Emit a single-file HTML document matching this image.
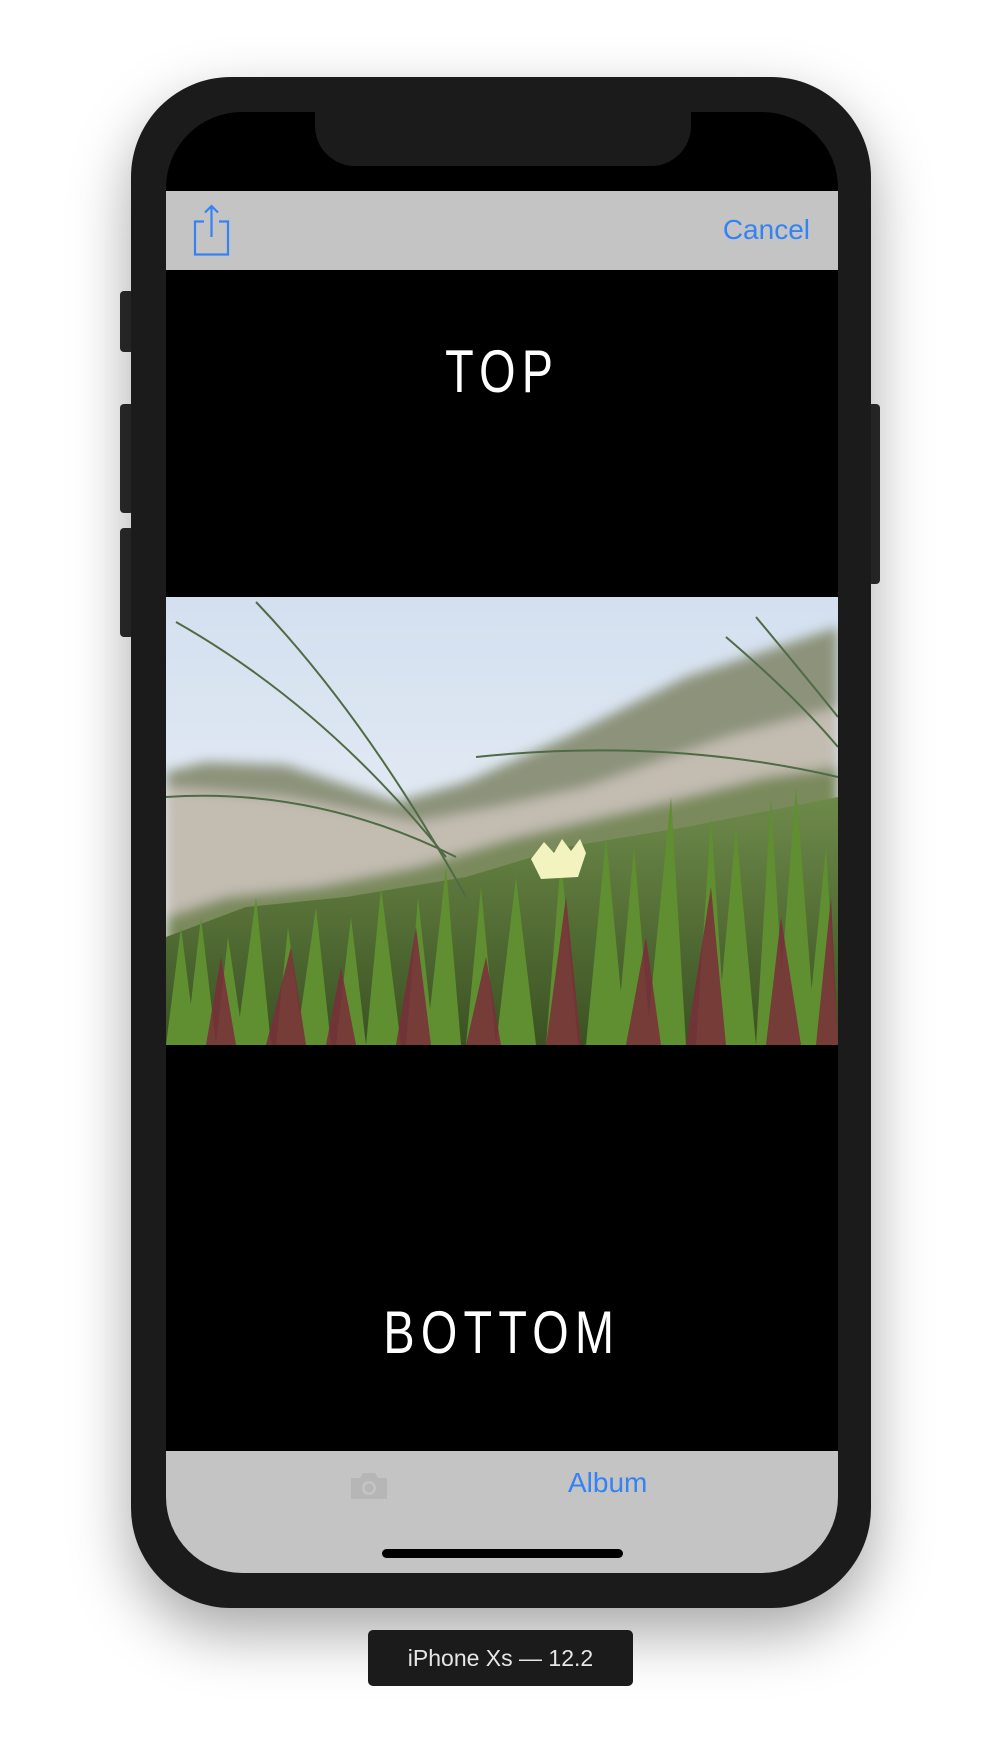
<!DOCTYPE html>
<html><head><meta charset="utf-8"><style>
html,body{margin:0;padding:0;width:1004px;height:1758px;background:#fff;overflow:hidden;font-family:"Liberation Sans",sans-serif}
.phone{position:absolute;left:131px;top:77px;width:740px;height:1531px;background:#1b1b1b;border-radius:100px;box-shadow:0 25px 60px rgba(0,0,0,.35)}
.btn{position:absolute;background:#2c2c2c;border-radius:4px}
.screen{position:absolute;left:166px;top:112px;width:672px;height:1461px;background:#000;border-radius:76px;overflow:hidden}
.notch{position:absolute;left:149px;top:0;width:376px;height:54px;background:#1b1b1b;border-radius:0 0 40px 40px}
.bar{position:absolute;left:0;width:672px;background:#c4c4c4}
.big{position:absolute;left:0;width:672px;text-align:center;color:#fff;font-size:60px;line-height:60px}
.big span{display:inline-block;transform:scaleX(.78);letter-spacing:8px}
.label{position:absolute;left:368px;top:1630px;width:265px;height:56px;background:#1b1b1b;border-radius:5px;color:#e6e6e6;font-size:23px;line-height:56px;text-align:center}
</style></head><body>
<div class="btn" style="left:120px;top:291px;width:14px;height:61px"></div>
<div class="btn" style="left:120px;top:404px;width:14px;height:109px"></div>
<div class="btn" style="left:120px;top:528px;width:14px;height:109px"></div>
<div class="btn" style="left:868px;top:404px;width:12px;height:180px"></div>
<div class="phone"></div>
<div class="screen">
 <div class="notch"></div>
 <div class="bar" style="top:79px;height:79px">
  <svg style="position:absolute;left:26px;top:12px" width="40" height="56" viewBox="0 0 40 56">
   <path d="M12 18.5H3V51.5H36V18.5H27" fill="none" stroke="#3582f5" stroke-width="2.2"/>
   <path d="M19.5 3V34M13 9.5L19.5 3L26 9.5" fill="none" stroke="#3582f5" stroke-width="2.2"/>
  </svg>
  <div style="position:absolute;right:28px;top:21px;color:#3582f5;font-size:28px;line-height:36px">Cancel</div>
 </div>
 <div class="big" style="top:230px"><span>TOP</span></div>
 <svg style="position:absolute;left:0;top:485px" width="672" height="448" viewBox="0 0 672 448">
  <defs>
   <linearGradient id="sky" x1="0" y1="0" x2="0" y2="1"><stop offset="0" stop-color="#d3e0f0"/><stop offset="1" stop-color="#f1f3f6"/></linearGradient>
   <linearGradient id="g" x1="0" y1="0" x2="0" y2="1"><stop offset="0" stop-color="#6e8a4a"/><stop offset="1" stop-color="#3a5222"/></linearGradient>
   <filter id="b"><feGaussianBlur stdDeviation="6"/></filter>
  </defs>
  <rect width="672" height="448" fill="url(#sky)"/>
  <g filter="url(#b)">
   <path d="M0 175 L40 165 L120 168 L170 185 L230 205 L300 185 L400 140 L520 80 L672 30 L672 448 L0 448Z" fill="#8c937a"/>
   <path d="M0 190 L120 200 L250 225 L330 210 L420 190 L560 140 L672 110 L672 448 L0 448Z" fill="#c2bcb1"/>
   <path d="M0 320 L60 300 L150 290 L250 270 L350 240 L480 210 L600 180 L672 170 L672 448 L0 448Z" fill="#7a8a5c"/>
  </g>
  <path d="M0 340 L80 310 L180 300 L300 280 L400 250 L520 230 L672 200 L672 448 L0 448Z" fill="url(#g)"/>
  <g fill="#5f8f30">
   <path d="M0 448 L15 330 L30 448Z"/><path d="M20 448 L35 320 L50 448Z"/><path d="M50 448 L62 340 L78 448Z"/><path d="M70 448 L90 300 L105 448Z"/><path d="M110 448 L122 330 L138 448Z"/><path d="M130 448 L150 310 L165 448Z"/>
   <path d="M170 448 L185 320 L200 448Z"/><path d="M200 448 L215 290 L235 448Z"/><path d="M240 448 L252 300 L268 448Z"/><path d="M260 448 L280 270 L295 448Z"/><path d="M300 448 L315 290 L330 448Z"/><path d="M330 448 L350 280 L370 448Z"/>
   <path d="M380 448 L395 260 L412 448Z"/><path d="M420 448 L440 240 L460 448Z"/><path d="M450 448 L468 250 L485 448Z"/><path d="M480 448 L505 200 L520 448Z"/><path d="M530 448 L545 220 L560 448Z"/><path d="M550 448 L570 230 L590 448Z"/>
   <path d="M590 448 L605 200 L620 448Z"/><path d="M610 448 L630 190 L650 448Z"/><path d="M640 448 L660 250 L672 448Z"/>
  </g>
  <g fill="#7a2e3a" opacity=".85">
   <path d="M40 448 L55 360 L70 448Z"/><path d="M100 448 L125 350 L140 448Z"/><path d="M160 448 L175 370 L190 448Z"/><path d="M230 448 L250 330 L265 448Z"/><path d="M300 448 L320 360 L335 448Z"/><path d="M380 448 L400 300 L415 448Z"/>
   <path d="M460 448 L480 340 L495 448Z"/><path d="M520 448 L545 290 L560 448Z"/><path d="M600 448 L615 320 L635 448Z"/><path d="M650 448 L665 300 L672 448Z"/>
  </g>
  <path d="M365 262 L378 245 L388 256 L396 242 L405 254 L414 242 L420 256 L412 280 L375 282Z" fill="#f3f3c0"/>
  <g stroke="#4f6b45" stroke-width="2" fill="none">
   <path d="M90 5 Q200 120 300 300"/><path d="M10 25 Q160 110 280 260"/><path d="M0 200 Q150 190 290 260"/>
   <path d="M310 160 Q500 140 672 180"/><path d="M560 40 Q630 100 672 150"/><path d="M590 20 Q640 80 672 120"/>
  </g>
 </svg>
 <div class="big" style="top:1191px"><span>BOTTOM</span></div>
 <div class="bar" style="top:1339px;height:122px">
  <svg style="position:absolute;left:184px;top:21px" width="38" height="28" viewBox="0 0 38 28">
   <path d="M1 6H10L13 1H25L28 6H37V27H1Z" fill="#b6b6b6"/>
   <circle cx="19" cy="16" r="7" fill="#c4c4c4"/><circle cx="19" cy="16" r="4.5" fill="#b6b6b6"/>
  </svg>
  <div style="position:absolute;left:402px;top:14px;color:#3582f5;font-size:28px;line-height:36px">Album</div>
  <div style="position:absolute;left:216px;top:98px;width:241px;height:9px;background:#000;border-radius:5px"></div>
 </div>
</div>
<div class="label">iPhone Xs — 12.2</div>
</body></html>
